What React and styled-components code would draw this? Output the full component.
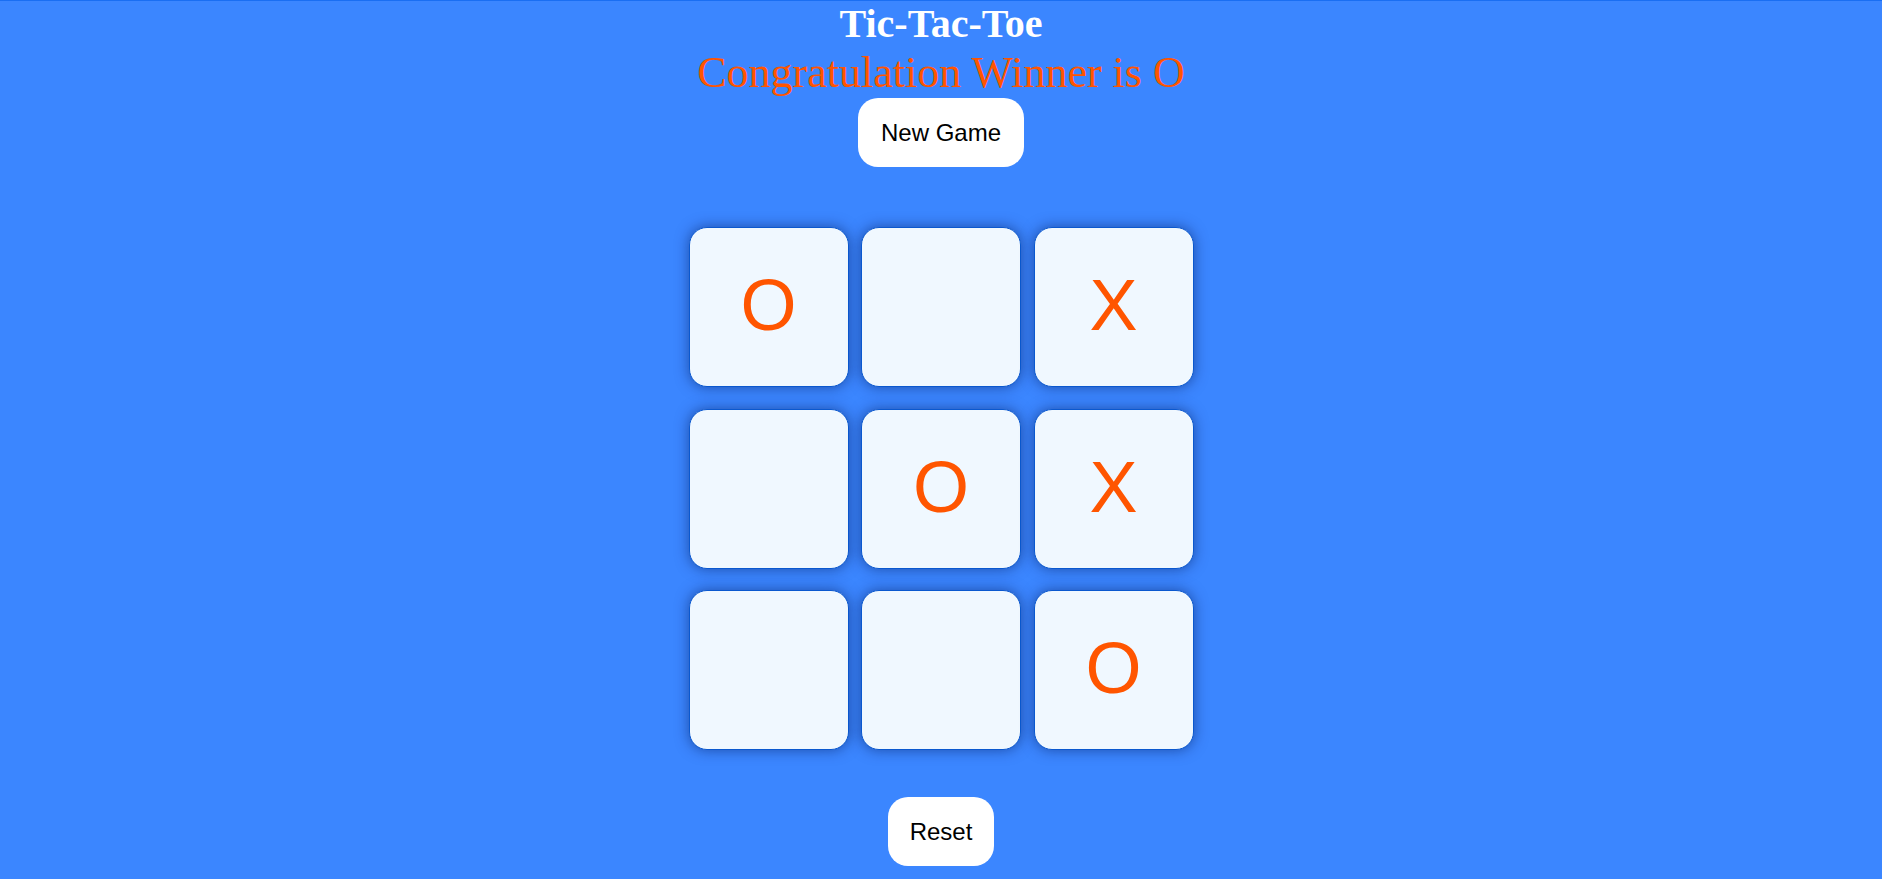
import React from 'react';
import styled, { createGlobalStyle } from 'styled-components';

const GlobalStyle = createGlobalStyle`
	body {
		margin: 0;
		background: #3b86ff;
		border-top: 1px solid #1a6ef2;
	}
`;

const Page = styled.div`
	display: flex;
	flex-direction: column;
	align-items: center;
	min-height: 100vh;
	text-align: center;
`;

const Title = styled.h1`
	margin: 0;
	font-family: "Liberation Serif", "Times New Roman", serif;
	font-weight: 700;
	font-size: 40px;
	line-height: 46px;
	color: #ffffff;
`;

const Status = styled.h2`
	margin: 1px 0 0;
	font-family: "Liberation Serif", "Times New Roman", serif;
	font-weight: 400;
	font-size: 44px;
	line-height: 50px;
	color: #ff5500;
`;

const Button = styled.button`
	margin-top: ${(p) => p.$top}px;
	padding: 0 ${(p) => p.$pad}px;
	height: 69px;
	border: none;
	border-radius: 20px;
	background: #ffffff;
	color: #000000;
	font-family: "Liberation Sans", Arial, sans-serif;
	font-size: 24px;
	cursor: pointer;
`;

const Board = styled.div`
	margin-top: 60px;
	display: grid;
	grid-template-columns: repeat(3, 160px);
	grid-auto-rows: 160px;
	column-gap: 12.5px;
	row-gap: 21.5px;
`;

const Cell = styled.div`
	display: flex;
	align-items: center;
	justify-content: center;
	box-sizing: border-box;
	border: 1px solid #0a58cf;
	border-radius: 18px;
	background: #f0f8ff;
	box-shadow: 0 0 14px rgba(0, 20, 80, 0.5);
	font-family: "Liberation Sans", Arial, sans-serif;
	font-size: 72px;
	color: #ff5500;
	padding-bottom: 4px;
`;

const board = ['O', '', 'X', '', 'O', 'X', '', '', 'O'];

const App = () => {
	return (
		<>
			<GlobalStyle />
			<Page>
				<Title>Tic-Tac-Toe</Title>
				<Status>Congratulation Winner is O</Status>
				<Button $top={0} $pad={23}>New Game</Button>
				<Board>
					{board.map((v, i) => (
						<Cell key={i}>{v}</Cell>
					))}
				</Board>
				<Button $top={47} $pad={22}>Reset</Button>
			</Page>
		</>
	);
};

export default App;
